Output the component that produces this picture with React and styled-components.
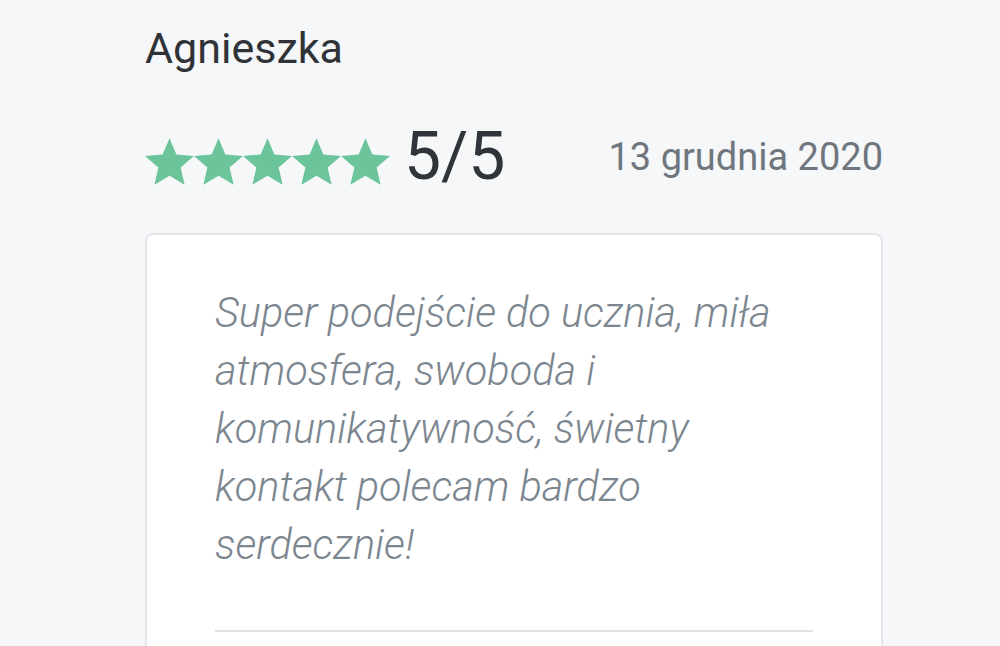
import styled, { createGlobalStyle } from "styled-components";

const GlobalStyle = createGlobalStyle`
    html, body {
        margin: 0;
        padding: 0;
        background: #f6f7f9;
        font-family: Roboto, "Noto Sans", sans-serif;
    }
`;

const review = {
    author: "Agnieszka",
    rating: 5,
    max: 5,
    date: "13 grudnia 2020",
    text: "Super podejście do ucznia, miła atmosfera, swoboda i komunikatywność, świetny kontakt polecam bardzo serdecznie!",
};

const Star = () => (
    <StarIcon viewBox="2 2 20 19">
        <path d="M12 17.27L18.18 21l-1.64-7.03L22 9.24l-7.19-.61L12 2 9.19 8.63 2 9.24l5.46 4.73L5.82 21z" />
    </StarIcon>
);

const App = () => {
    return (
        <>
            <GlobalStyle />
            <Page>
                <Author>{review.author}</Author>
                <RatingRow>
                    <Stars>
                        {Array.from({ length: review.rating }).map((_, i) => (
                            <Star key={i} />
                        ))}
                    </Stars>
                    <Score>
                        {review.rating}/{review.max}
                    </Score>
                    <DateText>{review.date}</DateText>
                </RatingRow>
                <Card>
                    <Quote>{review.text}</Quote>
                    <Divider />
                </Card>
            </Page>
        </>
    );
};

const Page = styled.div`
    width: 738px;
    height: 624px;
    padding: 22px 0 0 145px;
    overflow: hidden;
`;

const Author = styled.div`
    font-size: 43px;
    line-height: 52px;
    color: #2f3337;
`;

const RatingRow = styled.div`
    display: flex;
    align-items: center;
    margin-top: 44px;
`;

const Stars = styled.div`
    display: flex;
    margin-top: 9px;
`;

const StarIcon = styled.svg`
    width: 49px;
    height: 47px;
    fill: #6cc49b;
    display: block;
`;

const Score = styled.div`
    font-size: 66px;
    line-height: 78px;
    color: #30343a;
    margin-left: 14px;
`;

const DateText = styled.div`
    font-size: 38px;
    line-height: 46px;
    color: #70767d;
    margin-left: auto;
    white-space: nowrap;
`;

const Card = styled.div`
    margin-top: 37px;
    background: #ffffff;
    border: 2px solid #e3e7eb;
    border-radius: 8px;
    padding: 49px 68px 40px;
`;

const Quote = styled.p`
    margin: 0;
    font-size: 41.5px;
    line-height: 58px;
    font-style: italic;
    font-weight: 300;
    color: #7c868f;
`;

const Divider = styled.div`
    margin-top: 56px;
    height: 2px;
    background: #dfe3e7;
`;

export default App;
